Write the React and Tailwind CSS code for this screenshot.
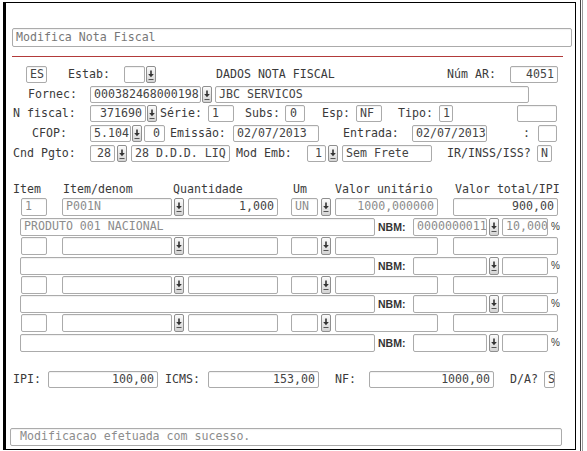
import React from "react";

const BOX =
  "shrink-0 border border-[#ababab] rounded-[2px] bg-white flex items-center px-[3px] overflow-hidden whitespace-nowrap leading-none shadow-[inset_0_1px_1px_rgba(0,0,0,0.06)]";

function Box({ className = "", children, right = false, gray = false }) {
  return (
    <div
      className={`${BOX} ${right ? "justify-end" : "justify-start"} ${
        gray ? "text-[#8c8c8c]" : "text-[#444]"
      } ${className}`}
    >
      {children}
    </div>
  );
}

function Btn({ className = "", h = "h-[17px]" }) {
  return (
    <div
      className={`shrink-0 w-[10px] ${h} border border-[#8f8f8f] rounded-[2px] bg-linear-to-b from-[#fbfbfb] to-[#d4d4d4] flex items-center justify-center ${className}`}
    >
      <svg width="8" height="12" viewBox="0 0 8 12">
        <path d="M4 1.5 V6" stroke="#333" strokeWidth="1.6" />
        <path d="M1.2 5 L6.8 5 L4 8.2 Z" fill="#333" />
        <path d="M1.5 10.5 H6.5" stroke="#555" strokeWidth="1" />
      </svg>
    </div>
  );
}

function L({ className = "", children }) {
  return (
    <div className={`shrink-0 whitespace-nowrap leading-none text-[#3a3a3a] ${className}`}>
      {children}
    </div>
  );
}

function Nbm() {
  return (
    <div className="shrink-0 ml-[3px] w-[30px] whitespace-nowrap font-['Liberation_Sans',sans-serif] text-[10.5px] font-semibold text-[#333] leading-none">
      NBM:
    </div>
  );
}

function ItemRow({ item, denom, qty, um, vu, vt, mt }) {
  return (
    <div className={`flex items-center h-[18px] ${mt}`}>
      <Box className="ml-[15px] w-[26px] h-[18px]" gray>{item}</Box>
      <Box className="ml-[15px] w-[110px] h-[18px]" gray>{denom}</Box>
      <Btn className="ml-[2px]" h="h-[18px]" />
      <Box className="ml-[4px] w-[90px] h-[18px]" right>{qty}</Box>
      <Box className="ml-[13px] w-[27px] h-[18px] px-[1px]" gray>{um}</Box>
      <Btn className="ml-[3px]" h="h-[18px]" />
      <Box className="ml-[4px] w-[103px] h-[18px]" right gray>{vu}</Box>
      <Box className="ml-[15px] w-[105px] h-[18px]" right>{vt}</Box>
    </div>
  );
}

function DescRow({ desc, nbm, pct, mt }) {
  return (
    <div className={`flex items-center h-[18px] ${mt}`}>
      <Box className="ml-[14px] w-[355px] h-[18px] px-[1px]" gray>{desc}</Box>
      <Nbm />
      <Box className="ml-[5px] w-[74px] h-[18px] px-[1px]" gray>{nbm}</Box>
      <Btn className="ml-[2px]" h="h-[18px]" />
      <Box className="ml-[3px] w-[46px] h-[18px] px-[2px]" gray>{pct}</Box>
      <L className="ml-[3px] w-[7px] font-['Liberation_Sans',sans-serif] text-[10px]">%</L>
    </div>
  );
}

export default function App() {
  return (
    <div className="w-[587px] h-[451px] bg-white flex overflow-hidden font-['DejaVu_Sans_Mono',monospace] text-[11.6px]">
      <div className="ml-[3px] mt-[2px] w-[573px] h-[448px] shrink-0 border-l-[3px] border-t border-r border-b border-black flex flex-col">
        {/* title */}
        <div className="flex mt-[25px]">
          <Box className="ml-[6px] w-[560px] h-[19px] text-[#777]" gray>
            Modifica Nota Fiscal
          </Box>
        </div>
        <div className="flex mt-[9px]">
          <div className="ml-[6px] w-[551px] h-px bg-[#b23a3a]" />
        </div>

        {/* row 1 */}
        <div className="flex items-center h-[17px] mt-[9px]">
          <Box className="ml-[20px] w-[21px] h-[17px]">ES</Box>
          <L className="ml-[21px] w-[42px]">Estab:</L>
          <Box className="ml-[14px] w-[21px] h-[17px]"></Box>
          <Btn className="ml-[1px]" />
          <L className="ml-[60px] w-[119px]">DADOS NOTA FISCAL</L>
          <L className="ml-[112px] w-[49px]">Núm AR:</L>
          <Box className="ml-[14px] w-[48px] h-[17px]" right>4051</Box>
        </div>

        {/* row 2 */}
        <div className="flex items-center h-[17px] mt-[3px]">
          <L className="ml-[22px] w-[49px]">Fornec:</L>
          <Box className="ml-[13px] w-[111px] h-[17px] px-[2px]">000382468000198</Box>
          <Btn className="ml-[1px]" />
          <Box className="ml-[3px] w-[314px] h-[17px]">JBC SERVICOS</Box>
        </div>

        {/* row 3 */}
        <div className="flex items-center h-[17px] mt-[2px]">
          <L className="ml-[7px] w-[63px]">N fiscal:</L>
          <Box className="ml-[14px] w-[56px] h-[17px]" right>371690</Box>
          <Btn className="ml-[1px]" />
          <L className="ml-[3px] w-[42px]">Série:</L>
          <Box className="ml-[6px] w-[26px] h-[17px]">1</Box>
          <L className="ml-[11px] w-[35px]">Subs:</L>
          <Box className="ml-[5px] w-[20px] h-[17px] px-[4px]">0</Box>
          <L className="ml-[17px] w-[28px]">Esp:</L>
          <Box className="ml-[6px] w-[26px] h-[17px]">NF</Box>
          <L className="ml-[16px] w-[35px]">Tipo:</L>
          <Box className="ml-[6px] w-[14px] h-[17px] px-[2px]">1</Box>
          <Box className="ml-[64px] w-[40px] h-[17px]"></Box>
        </div>

        {/* row 4 */}
        <div className="flex items-center h-[17px] mt-[3px]">
          <L className="ml-[26px] w-[35px]">CFOP:</L>
          <Box className="ml-[23px] w-[41px] h-[17px] px-[1px]">5.104</Box>
          <Btn className="ml-[1px]" />
          <Box className="ml-[2px] w-[21px] h-[17px] px-[4px]" right>0</Box>
          <L className="ml-[5px] w-[56px]">Emissão:</L>
          <Box className="ml-[7px] w-[86px] h-[17px] px-[2px]">02/07/2013</Box>
          <L className="ml-[24px] w-[56px]">Entrada:</L>
          <Box className="ml-[13px] w-[75px] h-[17px] px-[2px]">02/07/2013</Box>
          <L className="ml-[36px] w-[7px]">:</L>
          <Box className="ml-[8px] w-[19px] h-[17px]"></Box>
        </div>

        {/* row 5 */}
        <div className="flex items-center h-[17px] mt-[3px]">
          <L className="ml-[7px] w-[63px]">Cnd Pgto:</L>
          <Box className="ml-[14px] w-[25px] h-[17px]" right>28</Box>
          <Btn className="ml-[2px]" />
          <Box className="ml-[4px] w-[99px] h-[17px]">28 D.D.D. LIQ</Box>
          <L className="ml-[6px] w-[56px]">Mod Emb:</L>
          <Box className="ml-[15px] w-[19px] h-[17px]" right>1</Box>
          <Btn className="ml-[2px]" />
          <Box className="ml-[4px] w-[90px] h-[17px]">Sem Frete</Box>
          <L className="ml-[15px] w-[84px]">IR/INSS/ISS?</L>
          <Box className="ml-[6px] w-[15px] h-[17px] px-[2px]">N</Box>
        </div>

        {/* headers */}
        <div className="flex items-center h-[14px] mt-[21px]">
          <L className="ml-[7px] w-[28px]">Item</L>
          <L className="ml-[22px] w-[70px]">Item/denom</L>
          <L className="ml-[40px] w-[70px]">Quantidade</L>
          <L className="ml-[50px] w-[14px]">Um</L>
          <L className="ml-[28px] w-[98px]">Valor unitário</L>
          <L className="ml-[22px] w-[105px]">Valor total/IPI</L>
        </div>

        <ItemRow mt="mt-[1px]" item="1" denom="P001N" qty="1,000" um="UN" vu="1000,000000" vt="900,00" />
        <DescRow mt="mt-[2px]" desc="PRODUTO 001 NACIONAL" nbm="0000000011" pct="10,000" />
        <ItemRow mt="mt-[1px]" />
        <DescRow mt="mt-[2px]" />
        <ItemRow mt="mt-[1px]" />
        <DescRow mt="mt-[1px]" />
        <ItemRow mt="mt-[1px]" />
        <DescRow mt="mt-[2px]" />

        {/* totals */}
        <div className="flex items-center h-[17px] mt-[19px]">
          <L className="ml-[7px] w-[28px]">IPI:</L>
          <Box className="ml-[7px] w-[110px] h-[17px]" right>100,00</Box>
          <L className="ml-[7px] w-[35px]">ICMS:</L>
          <Box className="ml-[8px] w-[111px] h-[17px]" right>153,00</Box>
          <L className="ml-[16px] w-[21px]">NF:</L>
          <Box className="ml-[13px] w-[125px] h-[17px]" right>1000,00</Box>
          <L className="ml-[16px] w-[28px]">D/A?</L>
          <Box className="ml-[6px] w-[11px] h-[17px] px-[1px]">S</Box>
        </div>

        {/* status */}
        <div className="flex mt-[40px]">
          <Box className="ml-[4px] w-[552px] h-[18px] px-[9px]" gray>
            Modificacao efetuada com sucesso.
          </Box>
        </div>
      </div>
      <div className="ml-[4px] w-px h-[451px] shrink-0 bg-[#444]" />
      <div className="ml-[1px] w-px h-[451px] shrink-0 bg-[#9a9a9a]" />
    </div>
  );
}
